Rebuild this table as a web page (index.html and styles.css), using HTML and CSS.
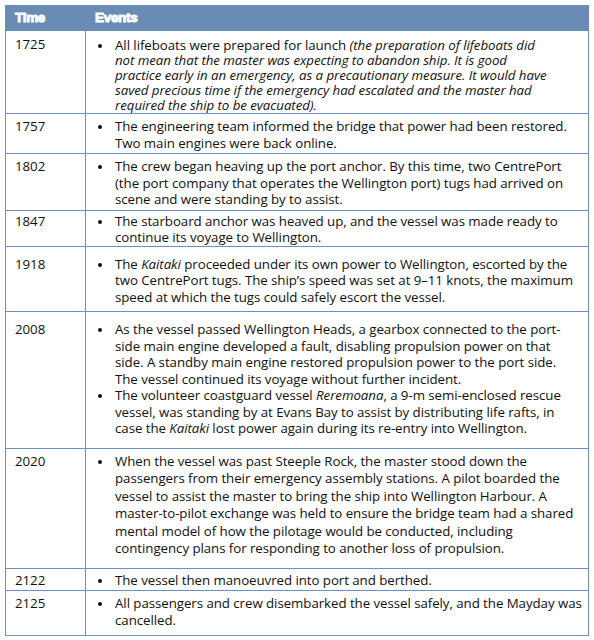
FILE: index.html
```html
<!DOCTYPE html>
<html lang="en">
<head>
<meta charset="utf-8">
<title>Timeline of events</title>
<link rel="stylesheet" href="styles.css">
</head>
<body>
<table class="timeline">
  <thead>
    <tr>
      <th class="col-time">Time</th>
      <th class="col-events">Events</th>
    </tr>
  </thead>
  <tbody>
    <tr class="row-first">
      <td class="time">1725</td>
      <td class="events"><ul><li>All lifeboats were prepared for launch <em>(the preparation of lifeboats did<br>not mean that the master was expecting to abandon ship. It is good<br>practice early in an emergency, as a precautionary measure. It would have<br>saved precious time if the emergency had escalated and the master had<br>required the ship to be evacuated).</em></li></ul></td>
    </tr>
    <tr>
      <td class="time">1757</td>
      <td class="events"><ul><li>The engineering team informed the bridge that power had been restored.<br>Two main engines were back online.</li></ul></td>
    </tr>
    <tr>
      <td class="time">1802</td>
      <td class="events"><ul><li>The crew began heaving up the port anchor. By this time, two CentrePort<br>(the port company that operates the Wellington port) tugs had arrived on<br>scene and were standing by to assist.</li></ul></td>
    </tr>
    <tr class="row-snug">
      <td class="time">1847</td>
      <td class="events"><ul><li>The starboard anchor was heaved up, and the vessel was made ready to<br>continue its voyage to Wellington.</li></ul></td>
    </tr>
    <tr class="row-roomy">
      <td class="time">1918</td>
      <td class="events"><ul><li>The <em>Kaitaki</em> proceeded under its own power to Wellington, escorted by the<br>two CentrePort tugs. The ship’s speed was set at 9–11 knots, the maximum<br>speed at which the tugs could safely escort the vessel.</li></ul></td>
    </tr>
    <tr class="row-wide">
      <td class="time">2008</td>
      <td class="events"><ul><li>As the vessel passed Wellington Heads, a gearbox connected to the port-<br>side main engine developed a fault, disabling propulsion power on that<br>side. A standby main engine restored propulsion power to the port side.<br>The vessel continued its voyage without further incident.</li><li>The volunteer coastguard vessel <em>Reremoana</em>, a 9-m semi-enclosed rescue<br>vessel, was standing by at Evans Bay to assist by distributing life rafts, in<br>case the <em>Kaitaki</em> lost power again during its re-entry into Wellington.</li></ul></td>
    </tr>
    <tr class="row-spaced">
      <td class="time">2020</td>
      <td class="events"><ul><li>When the vessel was past Steeple Rock, the master stood down the<br>passengers from their emergency assembly stations. A pilot boarded the<br>vessel to assist the master to bring the ship into Wellington Harbour. A<br>master-to-pilot exchange was held to ensure the bridge team had a shared<br>mental model of how the pilotage would be conducted, including<br>contingency plans for responding to another loss of propulsion.</li></ul></td>
    </tr>
    <tr class="row-tight">
      <td class="time">2122</td>
      <td class="events"><ul><li>The vessel then manoeuvred into port and berthed.</li></ul></td>
    </tr>
    <tr class="row-last">
      <td class="time">2125</td>
      <td class="events"><ul><li>All passengers and crew disembarked the vessel safely, and the Mayday was<br>cancelled.</li></ul></td>
    </tr>
  </tbody>
</table>
</body>
</html>
```

FILE: styles.css
```css
html, body {
  margin: 0;
  padding: 0;
  background: #ffffff;
}

body {
  padding: 5px;
  font-family: "Open Sans", "Noto Sans", "DejaVu Sans", sans-serif;
  font-size: 13.3px;
  letter-spacing: -0.06px;
  line-height: 16.5px;
  color: #111111;
}

.timeline {
  width: 584px;
  border-collapse: collapse;
  table-layout: fixed;
}

.timeline th {
  background: #6a8cb4;
  color: #ffffff;
  text-align: left;
  font-family: "Liberation Sans", Arial, sans-serif;
  font-weight: 700;
  font-size: 13.5px;
  letter-spacing: -0.3px;
  -webkit-text-stroke: 0.9px #ffffff;
  height: 25px;
  padding: 0 9px;
  border: 1px solid #6a8cb4;
  box-sizing: border-box;
}

.col-time {
  width: 80px;
}

.timeline td {
  border: 1px solid #6f8fbf;
  vertical-align: top;
  white-space: nowrap;
}

.time {
  padding: 4px 9px 2px 9px;
}

.events {
  padding: 4px 4px 2px 11px;
}

.events ul {
  margin: 0;
  padding: 0 0 0 18px;
  list-style: none;
}

.events li {
  position: relative;
}

.events li::before {
  content: "";
  position: absolute;
  left: -17px;
  top: 7px;
  width: 4px;
  height: 4px;
  border-radius: 50%;
  background: #111111;
}

.events em {
  font-style: italic;
}

/* 1725: tighter italic lines, text set a little lower */
.row-first .time {
  padding-top: 5px;
  padding-bottom: 0;
}

.row-first .events {
  padding-top: 7px;
  padding-bottom: 0;
  line-height: 15px;
}

.row-first .events li::before {
  top: 6px;
}

/* 1847 */
.row-snug .time,
.row-snug .events {
  padding-top: 2px;
  padding-bottom: 0;
}

/* 1918 */
.row-roomy .time,
.row-roomy .events {
  padding-top: 9px;
  padding-bottom: 6px;
}

/* 2008 */
.row-wide .time,
.row-wide .events {
  padding-top: 9px;
  padding-bottom: 11px;
}

/* 2020 */
.row-spaced .time,
.row-spaced .events {
  padding-top: 4px;
  padding-bottom: 10px;
}

.row-spaced .events {
  line-height: 17.5px;
}

.row-spaced .events li::before {
  top: 7.5px;
}

/* 2122 */
.row-tight .time,
.row-tight .events {
  padding-top: 3px;
  padding-bottom: 2px;
}

/* 2125 */
.row-last .time,
.row-last .events {
  padding-top: 4px;
  padding-bottom: 7px;
}
```
